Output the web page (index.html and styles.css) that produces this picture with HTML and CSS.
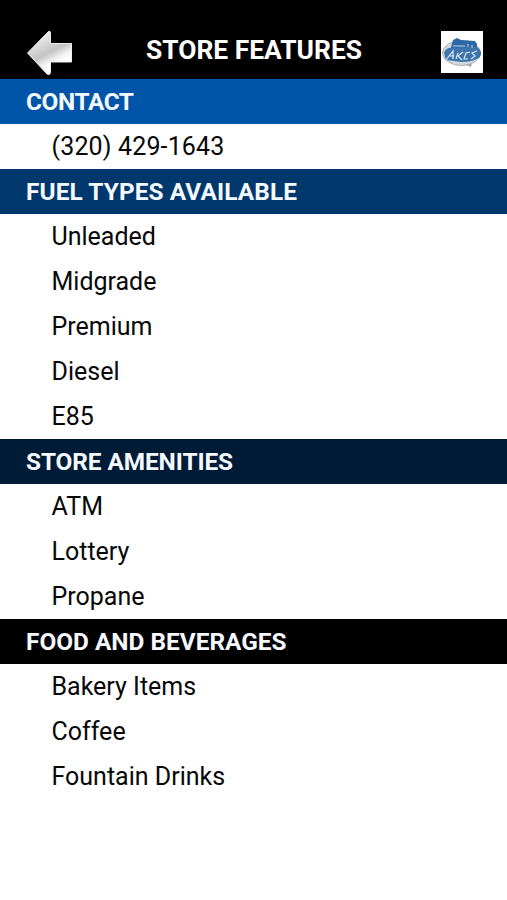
FILE: index.html
```html
<!DOCTYPE html>
<html lang="en">
<head>
    <meta charset="UTF-8">
    <meta name="viewport" content="width=device-width, initial-scale=1.0">
    <title>Store Features</title>
    <link rel="stylesheet" href="styles.css">
</head>
<body>
    <header class="topbar">
        <svg class="back" viewBox="0 0 48 48" width="48" height="48">
            <defs>
                <linearGradient id="metal" x1="0.3" y1="0.1" x2="0.65" y2="0.75">
                    <stop offset="0" stop-color="#eee"/>
                    <stop offset="0.35" stop-color="#d4d4d4"/>
                    <stop offset="0.6" stop-color="#c4c4c4"/>
                    <stop offset="0.85" stop-color="#f2f2f2"/>
                    <stop offset="1" stop-color="#fff"/>
                </linearGradient>
            </defs>
            <path d="M1.5 25 L22 4 Q24 2 24.500 4.500 V15.500 H45.500 V34 H24.500 V44 Q24 48 21 46 Z" fill="url(#metal)" stroke="#eee" stroke-width="1"/>
        </svg>
        <h1>STORE FEATURES</h1>
        <svg class="logo" viewBox="0 0 42 42" width="42" height="42">
            <rect width="42" height="42" fill="#fff"/>
            <ellipse cx="20.500" cy="22" rx="19" ry="12.500" fill="#d5d9dd" stroke="#a9b0b7"/>
            <path d="M12 9 L16 7 L20 9 L34 10 L36 13 V20 H9 Z" fill="#2e68a6"/>
            <path d="M3 22 Q5 16 12 17 L36 16 Q42 20 39 26 Q33 31 20 31 L5 29 Z" fill="#3d74ad"/>
            <path d="M5 29 L12 20 L12 28 M9 25 H13 M17 22 L15 28 M22 21 L17 25 L21 29 M29 21 L25 22 L23 28 H27 M36 20 L31 22 L34 25 L30 28" fill="none" stroke="#dbe7f2" stroke-width="1.200"/>
            <path d="M12 15 H24 M27 13 V16 M31 14 V17" stroke="#8fb2d4" stroke-width="1.500"/>
            <path d="M25 34 L31 32 L30 36 Z" fill="#aaa"/>
        </svg>
    </header>
    <main>
        <h2 class="contact">CONTACT</h2>
        <ul>
            <li class="phone">(320) 429-1643</li>
        </ul>
        <h2 class="fuel">FUEL TYPES AVAILABLE</h2>
        <ul>
            <li>Unleaded</li>
            <li>Midgrade</li>
            <li>Premium</li>
            <li>Diesel</li>
            <li>E85</li>
        </ul>
        <h2 class="amenities">STORE AMENITIES</h2>
        <ul>
            <li>ATM</li>
            <li>Lottery</li>
            <li>Propane</li>
        </ul>
        <h2 class="food">FOOD AND BEVERAGES</h2>
        <ul>
            <li>Bakery Items</li>
            <li>Coffee</li>
            <li>Fountain Drinks</li>
        </ul>
    </main>
</body>
</html>
```
FILE: styles.css
```css
* {
    box-sizing: border-box;
}

body {
    margin: 0;
    min-height: 100vh;
    background-color: #fff;
    font-family: Roboto, sans-serif;
    color: #080808;
}

.topbar {
    display: flex;
    align-items: flex-end;
    height: 79px;
    padding: 0 24px 3px 26px;
    background-color: #000;
}

h1 {
    flex: 1;
    margin: 0;
    padding-right: 7px;
    font-size: 26.4px;
    font-weight: 700;
    line-height: 51px;
    text-align: center;
    color: #fff;
}

.logo {
    margin-bottom: 3px;
}

h2 {
    height: 45px;
    margin: 0;
    padding-left: 26px;
    font-size: 24.4px;
    font-weight: 700;
    line-height: 46px;
    color: #f4f8ff;
}

ul {
    margin: 0;
    padding: 0;
    list-style: none;
}

li {
    height: 45px;
    padding-left: 51.5px;
    font-size: 25px;
    line-height: 45px;
}

.phone {
    letter-spacing: 0.15px;
}

.contact {
    background-color: #0055a8;
    letter-spacing: -0.4px;
}

.fuel {
    background-color: #00376c;
    letter-spacing: 0.1px;
}

.amenities {
    background-color: #001b36;
    letter-spacing: -0.1px;
}

.food {
    background-color: #000;
}
```
